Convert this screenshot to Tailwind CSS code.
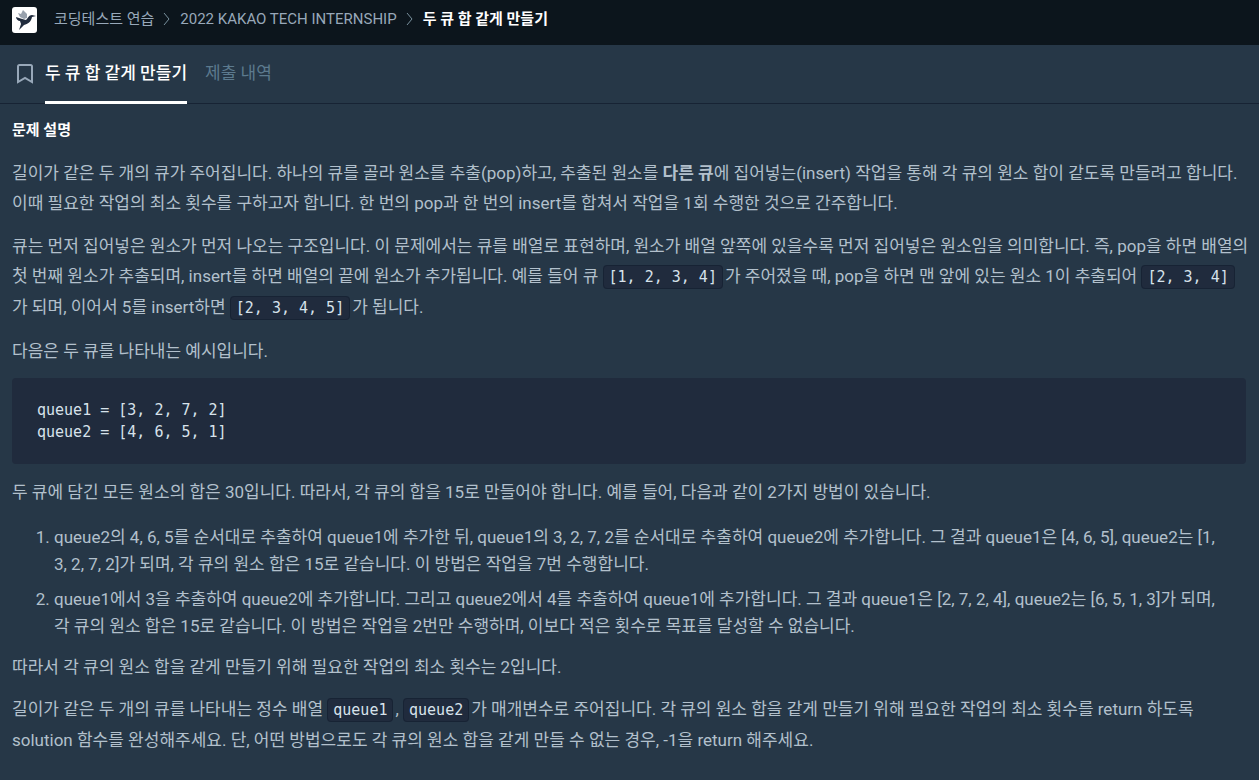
<!DOCTYPE html>
<html lang="ko">
<head>
  <meta charset="UTF-8" />
  <meta name="viewport" content="width=device-width, initial-scale=1" />
  <title>두 큐 합 같게 만들기</title>
  <script src="https://cdn.jsdelivr.net/npm/@tailwindcss/browser@4"></script>
</head>
<body class="min-h-screen bg-[#263747] font-['Roboto','Noto_Sans_CJK_KR',sans-serif] text-[17px] text-[#b2c0cc]">

  <!-- Breadcrumb -->
  <header class="flex h-[45px] items-start bg-[#0c151c] px-3 pt-[7px]">
    <a href="#" aria-label="홈" class="mr-4">
      <svg class="block size-[26px]" viewBox="0 0 26 26">
        <rect width="25" height="26" rx="3" fill="#fff" />
        <path d="M6 6l3 1 2-4 4 4v4l-3 1-4-2z" fill="#98a1ad" />
        <path d="M4 10c3 1 6 2 10 3 2-2 3-5 6-5l4 1-4 1c-1 5-4 7-8 8l-5 5 2-6-1-3c-2 0-4-2-4-4z" fill="#202b3d" />
      </svg>
    </a>
    <nav class="flex h-6 items-center text-[15px] whitespace-nowrap text-[#98a8b9]">
      <a href="#">코딩테스트 연습</a>
      <svg class="mx-2 h-3.5 w-2.5" viewBox="0 0 10 14" fill="none" stroke="#78909c"><path d="M2 1l5 6-5 6" /></svg>
      <a href="#">2022 KAKAO TECH INTERNSHIP</a>
      <svg class="mx-2 h-3.5 w-2.5" viewBox="0 0 10 14" fill="none" stroke="#78909c"><path d="M2 1l5 6-5 6" /></svg>
      <span class="font-bold text-white">두 큐 합 같게 만들기</span>
    </nav>
  </header>

  <!-- Tabs -->
  <div class="flex h-[59px] items-stretch border-b border-[#172334] px-3">
    <button type="button" aria-label="북마크" class="mr-2 flex w-[25px] items-center justify-center">
      <svg class="h-5 w-4" viewBox="0 0 16 20" fill="none" stroke="#98a8b9" stroke-width="2"><path d="M1 18V2.500Q1 1 2.500 1h11Q15 1 15 2.500V18l-7-4z" /></svg>
    </button>
    <a href="#" class="-mb-px border-b-3 border-white pt-4 font-medium text-white">두 큐 합 같게 만들기</a>
    <a href="#" class="ml-[18px] pt-4 text-[#5c7a8e]">제출 내역</a>
  </div>

  <main class="pt-4 pr-2 pb-6 pl-3">
    <h1 class="mb-[18px] text-[15px] leading-5 font-bold text-white">문제 설명</h1>

    <p class="mb-[13px] leading-[30px]">길이가 같은 두 개의 큐가 주어집니다. 하나의 큐를 골라 원소를 추출(pop)하고, 추출된 원소를 <strong>다른 큐</strong>에 집어넣는(insert) 작업을 통해 각 큐의 원소 합이 같도록 만들려고 합니다. 이때 필요한 작업의 최소 횟수를 구하고자 합니다. 한 번의 pop과 한 번의 insert를 합쳐서 작업을 1회 수행한 것으로 간주합니다.</p>

    <p class="mb-[13px] leading-[30px]">큐는 먼저 집어넣은 원소가 먼저 나오는 구조입니다. 이 문제에서는 큐를 배열로 표현하며, 원소가 배열 앞쪽에 있을수록 먼저 집어넣은 원소임을 의미합니다. 즉, pop을 하면 배열의 첫 번째 원소가 추출되며, insert를 하면 배열의 끝에 원소가 추가됩니다. 예를 들어 큐 <code class="mr-0.5 rounded border border-[#172334] bg-[#202b3d] px-[5px] py-0.5 font-['DejaVu_Sans_Mono',monospace] text-[15px] whitespace-nowrap text-[#d7e2eb]">[1, 2, 3, 4]</code>가 주어졌을 때, pop을 하면 맨 앞에 있는 원소 1이 추출되어 <code class="mr-0.5 rounded border border-[#172334] bg-[#202b3d] px-[5px] py-0.5 font-['DejaVu_Sans_Mono',monospace] text-[15px] whitespace-nowrap text-[#d7e2eb]">[2, 3, 4]</code>가 되며, 이어서 5를 insert하면 <code class="mr-0.5 rounded border border-[#172334] bg-[#202b3d] px-[5px] py-0.5 font-['DejaVu_Sans_Mono',monospace] text-[15px] whitespace-nowrap text-[#d7e2eb]">[2, 3, 4, 5]</code>가 됩니다.</p>

    <p class="mb-3 leading-[30px]">다음은 두 큐를 나타내는 예시입니다.</p>

    <pre class="mr-[5px] mb-[13px] rounded bg-[#202b3d] px-[25px] py-[21px] font-['DejaVu_Sans_Mono',monospace] text-[15px] leading-[22px] text-[#d7e2eb]"><code class="font-['DejaVu_Sans_Mono',monospace]">queue1 = [3, 2, 7, 2]
queue2 = [4, 6, 5, 1]</code></pre>

    <p class="mb-[17px] leading-[30px]">두 큐에 담긴 모든 원소의 합은 30입니다. 따라서, 각 큐의 합을 15로 만들어야 합니다. 예를 들어, 다음과 같이 2가지 방법이 있습니다.</p>

    <ol class="mb-3 flex list-decimal flex-col gap-2 pr-6 pl-[42px] leading-[27px]">
      <li>queue2의 4, 6, 5를 순서대로 추출하여 queue1에 추가한 뒤, queue1의 3, 2, 7, 2를 순서대로 추출하여 queue2에 추가합니다. 그 결과 queue1은 [4, 6, 5], queue2는 [1, 3, 2, 7, 2]가 되며, 각 큐의 원소 합은 15로 같습니다. 이 방법은 작업을 7번 수행합니다.</li>
      <li>queue1에서 3을 추출하여 queue2에 추가합니다. 그리고 queue2에서 4를 추출하여 queue1에 추가합니다. 그 결과 queue1은 [2, 7, 2, 4], queue2는 [6, 5, 1, 3]가 되며, 각 큐의 원소 합은 15로 같습니다. 이 방법은 작업을 2번만 수행하며, 이보다 적은 횟수로 목표를 달성할 수 없습니다.</li>
    </ol>

    <p class="mb-3 leading-[30px]">따라서 각 큐의 원소 합을 같게 만들기 위해 필요한 작업의 최소 횟수는 2입니다.</p>

    <p class="leading-[30px]">길이가 같은 두 개의 큐를 나타내는 정수 배열 <code class="mr-0.5 rounded border border-[#172334] bg-[#202b3d] px-[5px] py-0.5 font-['DejaVu_Sans_Mono',monospace] text-[15px] whitespace-nowrap text-[#d7e2eb]">queue1</code>, <code class="mr-0.5 rounded border border-[#172334] bg-[#202b3d] px-[5px] py-0.5 font-['DejaVu_Sans_Mono',monospace] text-[15px] whitespace-nowrap text-[#d7e2eb]">queue2</code>가 매개변수로 주어집니다. 각 큐의 원소 합을 같게 만들기 위해 필요한 작업의 최소 횟수를 return 하도록 solution 함수를 완성해주세요. 단, 어떤 방법으로도 각 큐의 원소 합을 같게 만들 수 없는 경우, -1을 return 해주세요.</p>
  </main>

</body>
</html>
